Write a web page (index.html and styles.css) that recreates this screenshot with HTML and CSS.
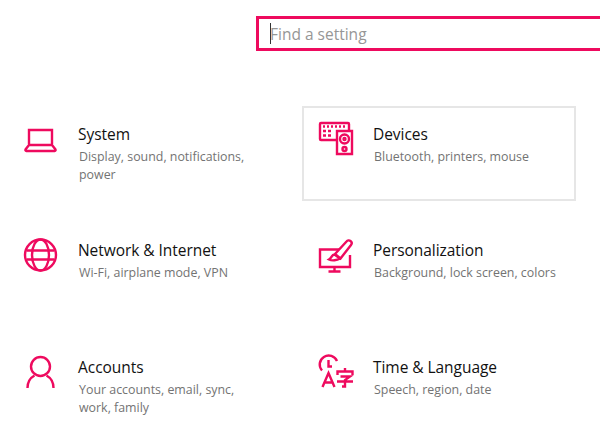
FILE: index.html
```html
<!DOCTYPE html>
<html lang="en">
<head>
<meta charset="utf-8">
<title>Settings</title>
<link rel="stylesheet" href="styles.css">
</head>
<body>
<div class="page">
  <div class="search-row">
    <div class="search"><span class="caret"></span><span class="placeholder">Find a setting</span></div>
  </div>
  <div class="grid">
    <div class="card">
      <svg class="icon" viewBox="0 0 36 36"><path d="M5 8h23v15H5zM5 23l-3.500 4.500a1 1 0 0 0 .8 1.500h28.400a1 1 0 0 0 .8-1.500L28 23"/></svg>
      <div class="text"><div class="title">System</div><div class="desc">Display, sound, notifications, power</div></div>
    </div>
    <div class="card selected">
      <svg class="icon" viewBox="0 0 36 36"><path d="M17 18H2a1 1 0 0 1-1-1V2a1 1 0 0 1 1-1h27a1 1 0 0 1 1 1v6"/><path d="M4 4.500h2M8 4.500h2M12 4.500h2M16 4.500h2M20 4.500h2M24 4.500h2M4 9h3M9 9h3M4 13.500h3M9 13.500h3"/><path d="M18 9h15v23H18z"/><circle cx="25.500" cy="17" r="4.500"/><circle cx="25.500" cy="17" r="1"/><circle cx="25.500" cy="27" r="2"/></svg>
      <div class="text"><div class="title">Devices</div><div class="desc">Bluetooth, printers, mouse</div></div>
    </div>
    <div class="card">
      <svg class="icon" viewBox="0 0 36 36"><circle cx="16.500" cy="17" r="15.500"/><ellipse cx="16.500" cy="17" rx="8.500" ry="15.500"/><path d="M2.500 12.500h28M2.500 21.500h28"/></svg>
      <div class="text"><div class="title">Network &amp; Internet</div><div class="desc">Wi-Fi, airplane mode, VPN</div></div>
    </div>
    <div class="card">
      <svg class="icon" viewBox="0 0 36 36"><path d="M20 11.500H1v17.500h30V17M15.500 29v4.500M9.500 33.500h12"/><path d="M16 16L27.500 3.500a2.800 2.800 0 0 1 4.500 3.500L21.500 20.500zM15.500 16.500c-3 .5-3 3.500-5.500 5 3 1.500 8 1 11-1z"/></svg>
      <div class="text"><div class="title">Personalization</div><div class="desc">Background, lock screen, colors</div></div>
    </div>
    <div class="card">
      <svg class="icon" viewBox="0 0 36 36"><circle cx="16.500" cy="11.500" r="9.500"/><path d="M3.500 33c0-6 2.500-10 7-12.500M29.500 33c0-6-2.500-10-7-12.500"/></svg>
      <div class="text"><div class="title">Accounts</div><div class="desc">Your accounts, email, sync, work, family</div></div>
    </div>
    <div class="card">
      <svg class="icon" viewBox="0 0 36 36"><path d="M3 15.500a9 9 0 1 1 15-9.500M9.500 5v6.500H13M3.500 32l6-14 6 14M5.500 27.500h8"/><path d="M26 13v3.500M18.500 20v-3.500h15V20M21.500 21.500h9.500l-5 3.500v6.500h-3M18 26.500h16"/></svg>
      <div class="text"><div class="title">Time &amp; Language</div><div class="desc">Speech, region, date</div></div>
    </div>
  </div>
</div>
</body>
</html>
```
FILE: styles.css
```css
html, body {
  margin: 0;
  padding: 0;
  background: #fff;
  overflow: hidden;
}
.page {
  width: 600px;
  height: 447px;
  overflow: hidden;
  font-family: "Open Sans", "Noto Sans", sans-serif;
}
.search-row {
  padding: 16px 0 0 256px;
}
.search {
  box-sizing: border-box;
  width: 360px;
  height: 35px;
  border: 3px solid #ee0a5e;
  display: flex;
  align-items: center;
  padding-left: 11px;
}
.caret {
  width: 1px;
  height: 21px;
  margin-right: -1px;
  background: #333;
}
.placeholder {
  font-size: 15.500px;
  color: #969696;
}
.grid {
  display: grid;
  grid-template-columns: 274px 274px;
  grid-template-rows: 95px 96px 95px;
  column-gap: 21px;
  row-gap: 21px;
  padding: 55px 0 0 7px;
}
.card {
  box-sizing: border-box;
  display: flex;
  align-items: flex-start;
  border: 2px solid transparent;
  padding: 14px 10px 0 15px;
}
.card.selected {
  border-color: #e6e6e6;
}
.icon {
  flex: none;
  width: 36px;
  height: 36px;
  margin-right: 18px;
  fill: none;
  stroke: #ee0a5e;
  stroke-width: 2.400;
  overflow: visible;
}
.text {
  max-width: 186px;
}
.title {
  font-size: 15.500px;
  line-height: 24px;
  color: #111;
  letter-spacing: -0.050px;
}
.desc {
  font-size: 12.400px;
  line-height: 17.500px;
  color: #737373;
  margin-top: 2px;
  margin-left: 1px;
}
```
